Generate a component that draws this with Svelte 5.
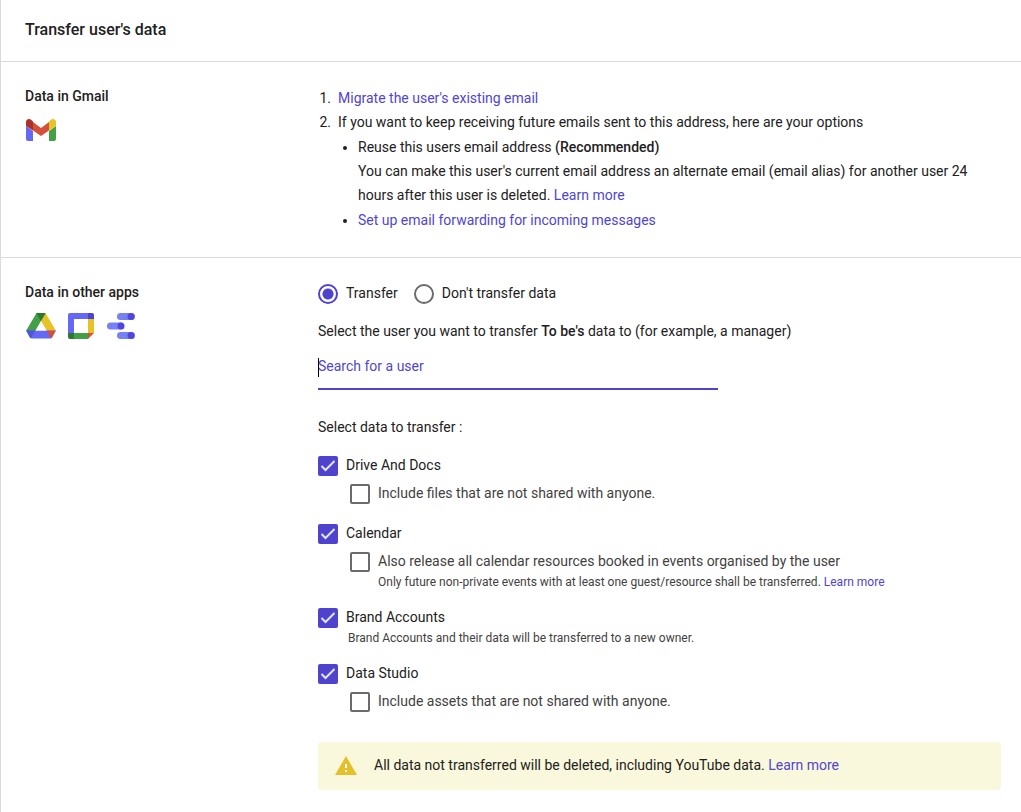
<script lang="ts">
    type Option = { id: string, label: string, checked: boolean };
    type Group = Option & { extra?: Option, note?: string, link?: boolean };

    let mode = $state('transfer');
    let user = $state('');
    let groups: Group[] = $state([
        {
            id: 'drive', label: 'Drive And Docs', checked: true,
            extra: { id: 'drive-private', label: 'Include files that are not shared with anyone.', checked: false }
        },
        {
            id: 'calendar', label: 'Calendar', checked: true,
            extra: { id: 'calendar-resources', label: 'Also release all calendar resources booked in events organised by the user', checked: false },
            note: 'Only future non-private events with at least one guest/resource shall be transferred.',
            link: true
        },
        {
            id: 'brand', label: 'Brand Accounts', checked: true,
            note: 'Brand Accounts and their data will be transferred to a new owner.'
        },
        {
            id: 'studio', label: 'Data Studio', checked: true,
            extra: { id: 'studio-private', label: 'Include assets that are not shared with anyone.', checked: false }
        }
    ]);
</script>

<main>
    <header>
        <h1>Transfer user's data</h1>
    </header>

    <section>
        <div class="side">
            <h2>Data in Gmail</h2>
            <div class="icons">
                <svg width="32" height="24" viewBox="0 0 32 24" aria-label="Gmail" role="img">
                    <path fill="#6468f5" d="M1 8l7 5v10H3a2 2 0 0 1-2-2z" />
                    <path fill="#43a047" d="M24 13l7-5v13a2 2 0 0 1-2 2h-5z" />
                    <path fill="#d5503a" d="M8 4l8 6 8-6v8.500l-8 5.500-8-5.500z" />
                    <path fill="#ac3025" d="M1 4a3 3 0 0 1 5-2.200L8 3.500v9L1 8z" />
                    <path fill="#e8c325" d="M31 4a3 3 0 0 0-5-2.200L24 3.500v9L31 8z" />
                </svg>
            </div>
        </div>
        <div class="content">
            <ol>
                <li><a href="#migrate">Migrate the user's existing email</a></li>
                <li>
                    If you want to keep receiving future emails sent to this address, here are your options
                    <ul>
                        <li>
                            Reuse this users email address <b>(Recommended)</b><br>
                            You can make this user's current email address an alternate email (email alias) for another user 24 hours after this user is deleted. <a href="#alias">Learn more</a>
                        </li>
                        <li><a href="#forwarding">Set up email forwarding for incoming messages</a></li>
                    </ul>
                </li>
            </ol>
        </div>
    </section>

    <section>
        <div class="side">
            <h2>Data in other apps</h2>
            <div class="icons">
                <svg width="32" height="28" viewBox="0 0 32 28" aria-label="Drive" role="img">
                    <path fill="#43a047" d="M11.500 1H16v8L6.500 25.500 5 25.500 1.200 18.500z" />
                    <path fill="#e8c325" d="M16 1h4.500l10.300 17.500H21.500L16 9z" />
                    <path fill="#6468f5" d="M1.200 18.500h29.600L27 25.500q-.6 1-2 1H7q-1.400 0-2-1z" />
                    <path fill="#fff" d="M16 9.500l5.300 9H10.700z" />
                    <path fill="#2b7a30" d="M11.500 1.400q.5-.4 1.200-.4h6.600q.7 0 1.200.4L16 9z" />
                    <path fill="#5155da" d="M1.200 18.500h9L6 26.300q-.6-.2-1-.8z" />
                    <path fill="#d5503a" d="M21.700 18.500h9.100L27 25.500q-.4.600-1 .8z" />
                </svg>
                <svg width="32" height="28" viewBox="0 0 32 28" aria-label="Calendar" role="img">
                    <path fill="#6468f5" d="M5 1h18v6H9v14H3V3a2 2 0 0 1 2-2z" />
                    <path fill="#4c44cf" d="M23 1h4a2 2 0 0 1 2 2v4h-6z" />
                    <path fill="#e8c325" d="M23 7h6v14h-6z" />
                    <path fill="#43a047" d="M9 21h14v6H9z" />
                    <path fill="#2b7a30" d="M3 21h6v6H5a2 2 0 0 1-2-2z" />
                    <path fill="#d5503a" d="M23 21h6l-6 6z" />
                </svg>
                <svg width="32" height="28" viewBox="0 0 32 28" aria-label="Data Studio" role="img">
                    <g fill="#7681f3">
                        <rect x="12" y="1" width="18" height="7" rx="3.500" />
                        <rect x="2" y="10.500" width="17" height="7" rx="3.500" />
                        <rect x="12" y="20" width="18" height="7" rx="3.500" />
                    </g>
                    <g fill="#5046db">
                        <circle cx="26" cy="4.500" r="3.500" />
                        <circle cx="16" cy="14" r="3.500" />
                        <circle cx="26" cy="23.500" r="3.500" />
                    </g>
                </svg>
            </div>
        </div>
        <div class="content">
            <div class="radios">
                <label><input type="radio" name="mode" value="transfer" bind:group={mode}><span>Transfer</span></label>
                <label><input type="radio" name="mode" value="keep" bind:group={mode}><span>Don't transfer data</span></label>
            </div>

            <p class="prompt">Select the user you want to transfer <b>To be's</b> data to (for example, a manager)</p>
            <div class="search">
                <input type="text" placeholder="Search for a user" aria-label="Search for a user" bind:value={user}>
                {#if !user}
                    <span class="caret"></span>
                {/if}
            </div>

            <p class="dataTitle">Select data to transfer :</p>
            <div class="groups">
                {#each groups as group (group.id)}
                    <div>
                        <label class="row"><input type="checkbox" name={group.id} bind:checked={group.checked}><span>{group.label}</span></label>
                        {#if group.extra}
                            <label class="row extra"><input type="checkbox" name={group.extra.id} bind:checked={group.extra.checked}><span>{group.extra.label}</span></label>
                        {/if}
                        {#if group.note}
                            <p class="note" class:indented={group.extra}>
                                {group.note}
                                {#if group.link}
                                    <a href="#calendar">Learn more</a>
                                {/if}
                            </p>
                        {/if}
                    </div>
                {/each}
            </div>

            <div class="warning">
                <svg width="24" height="24" viewBox="0 0 24 24" aria-hidden="true">
                    <path fill="#e6c029" d="M1 21h22L12 2z" />
                    <path fill="#fff" d="M11 10h2v4h-2zM11 16h2v2h-2z" />
                </svg>
                <p>All data not transferred will be deleted, including YouTube data. <a href="#youtube">Learn more</a></p>
            </div>
        </div>
    </section>
</main>

<style>
    :global(body) {
        margin: 0;
        background-color: #fff;
    }

    main {
        box-sizing: border-box;
        min-height: 100vh;
        border-left: 1px solid #dadada;
        font-family: Roboto, "Liberation Sans", sans-serif;
        font-size: 14px;
        line-height: 24px;
        color: #212121;
    }

    h1, h2, p, ol, ul {
        margin: 0;
        padding: 0;
    }

    h1 {
        font-size: 16px;
        font-weight: 500;
    }

    h2 {
        font-size: 14px;
        line-height: 20px;
        font-weight: 500;
    }

    b {
        font-weight: 500;
    }

    a {
        color: #4f46d0;
        text-decoration: none;
    }

    header {
        padding: 18px 24px 19px;
        border-bottom: 1px solid #dadada;
    }

    section {
        display: grid;
        grid-template-columns: 269px 1fr;
        column-gap: 24px;
        padding: 24px 20px 22px 24px;
    }

    section + section {
        border-top: 1px solid #dadada;
    }

    .icons {
        display: flex;
        align-items: center;
        gap: 8px;
        height: 28px;
        margin-top: 10px;
    }

    .content ol {
        padding: 0 0 3px 20px;
    }

    ol > li::marker {
        content: counter(list-item) ".\a0\a0";
    }

    .content ul {
        padding-left: 20px;
        list-style: disc;
    }

    ul li {
        padding-top: 1px;
    }

    .radios {
        display: flex;
        gap: 16px;
        padding: 2px 0;
    }

    label {
        display: flex;
        align-items: center;
        gap: 8px;
    }

    label span {
        padding-bottom: 2px;
        line-height: 18px;
    }

    input[type="radio"],
    input[type="checkbox"] {
        appearance: none;
        box-sizing: border-box;
        flex: none;
        width: 20px;
        height: 20px;
        margin: 0;
        border: 2px solid #6b6b6b;
        border-radius: 2px;
    }

    input[type="radio"] {
        border-radius: 50%;
    }

    input[type="radio"]:checked {
        border-color: #4f43ce;
        background: radial-gradient(circle, #4f43ce 5px, transparent 6px);
    }

    input[type="checkbox"]:checked {
        border-color: #4f43ce;
        background: #4f43ce url("data:image/svg+xml,%3Csvg xmlns='http://www.w3.org/2000/svg' viewBox='0 0 16 16'%3E%3Cpath fill='none' stroke='%23e4e6ff' stroke-width='2' d='M1.500 8l4 4 9-9'/%3E%3C/svg%3E") center / 16px no-repeat;
    }

    .prompt {
        margin-top: 13px;
    }

    .search {
        position: relative;
        max-width: 400px;
        margin-top: 5px;
    }

    .search input {
        box-sizing: border-box;
        display: block;
        width: 100%;
        height: 42px;
        padding: 0 0 4px;
        border: none;
        border-bottom: 2px solid #4f43ce;
        background: none;
        outline: none;
        font: inherit;
        color: inherit;
    }

    .search input::placeholder {
        color: #4f46d0;
        opacity: 1;
    }

    .caret {
        position: absolute;
        top: 10px;
        left: 0;
        width: 1px;
        height: 19px;
        background-color: #000;
    }

    .dataTitle {
        margin: 25px 0 13px;
    }

    .groups {
        display: flex;
        flex-direction: column;
        gap: 12px;
    }

    .row {
        padding: 4px 0;
    }

    .extra {
        margin-left: 32px;
        color: #424242;
    }

    .note {
        margin: -4px 0 0 30px;
        font-size: 12px;
        line-height: 20px;
        color: #424242;
    }

    .indented {
        margin-left: 60px;
    }

    .warning {
        display: flex;
        align-items: center;
        gap: 16px;
        margin-top: 26px;
        padding: 12px 16px;
        border-radius: 4px;
        background-color: #faf8dc;
    }

    .warning p {
        padding-bottom: 2px;
        line-height: 22px;
    }
</style>
